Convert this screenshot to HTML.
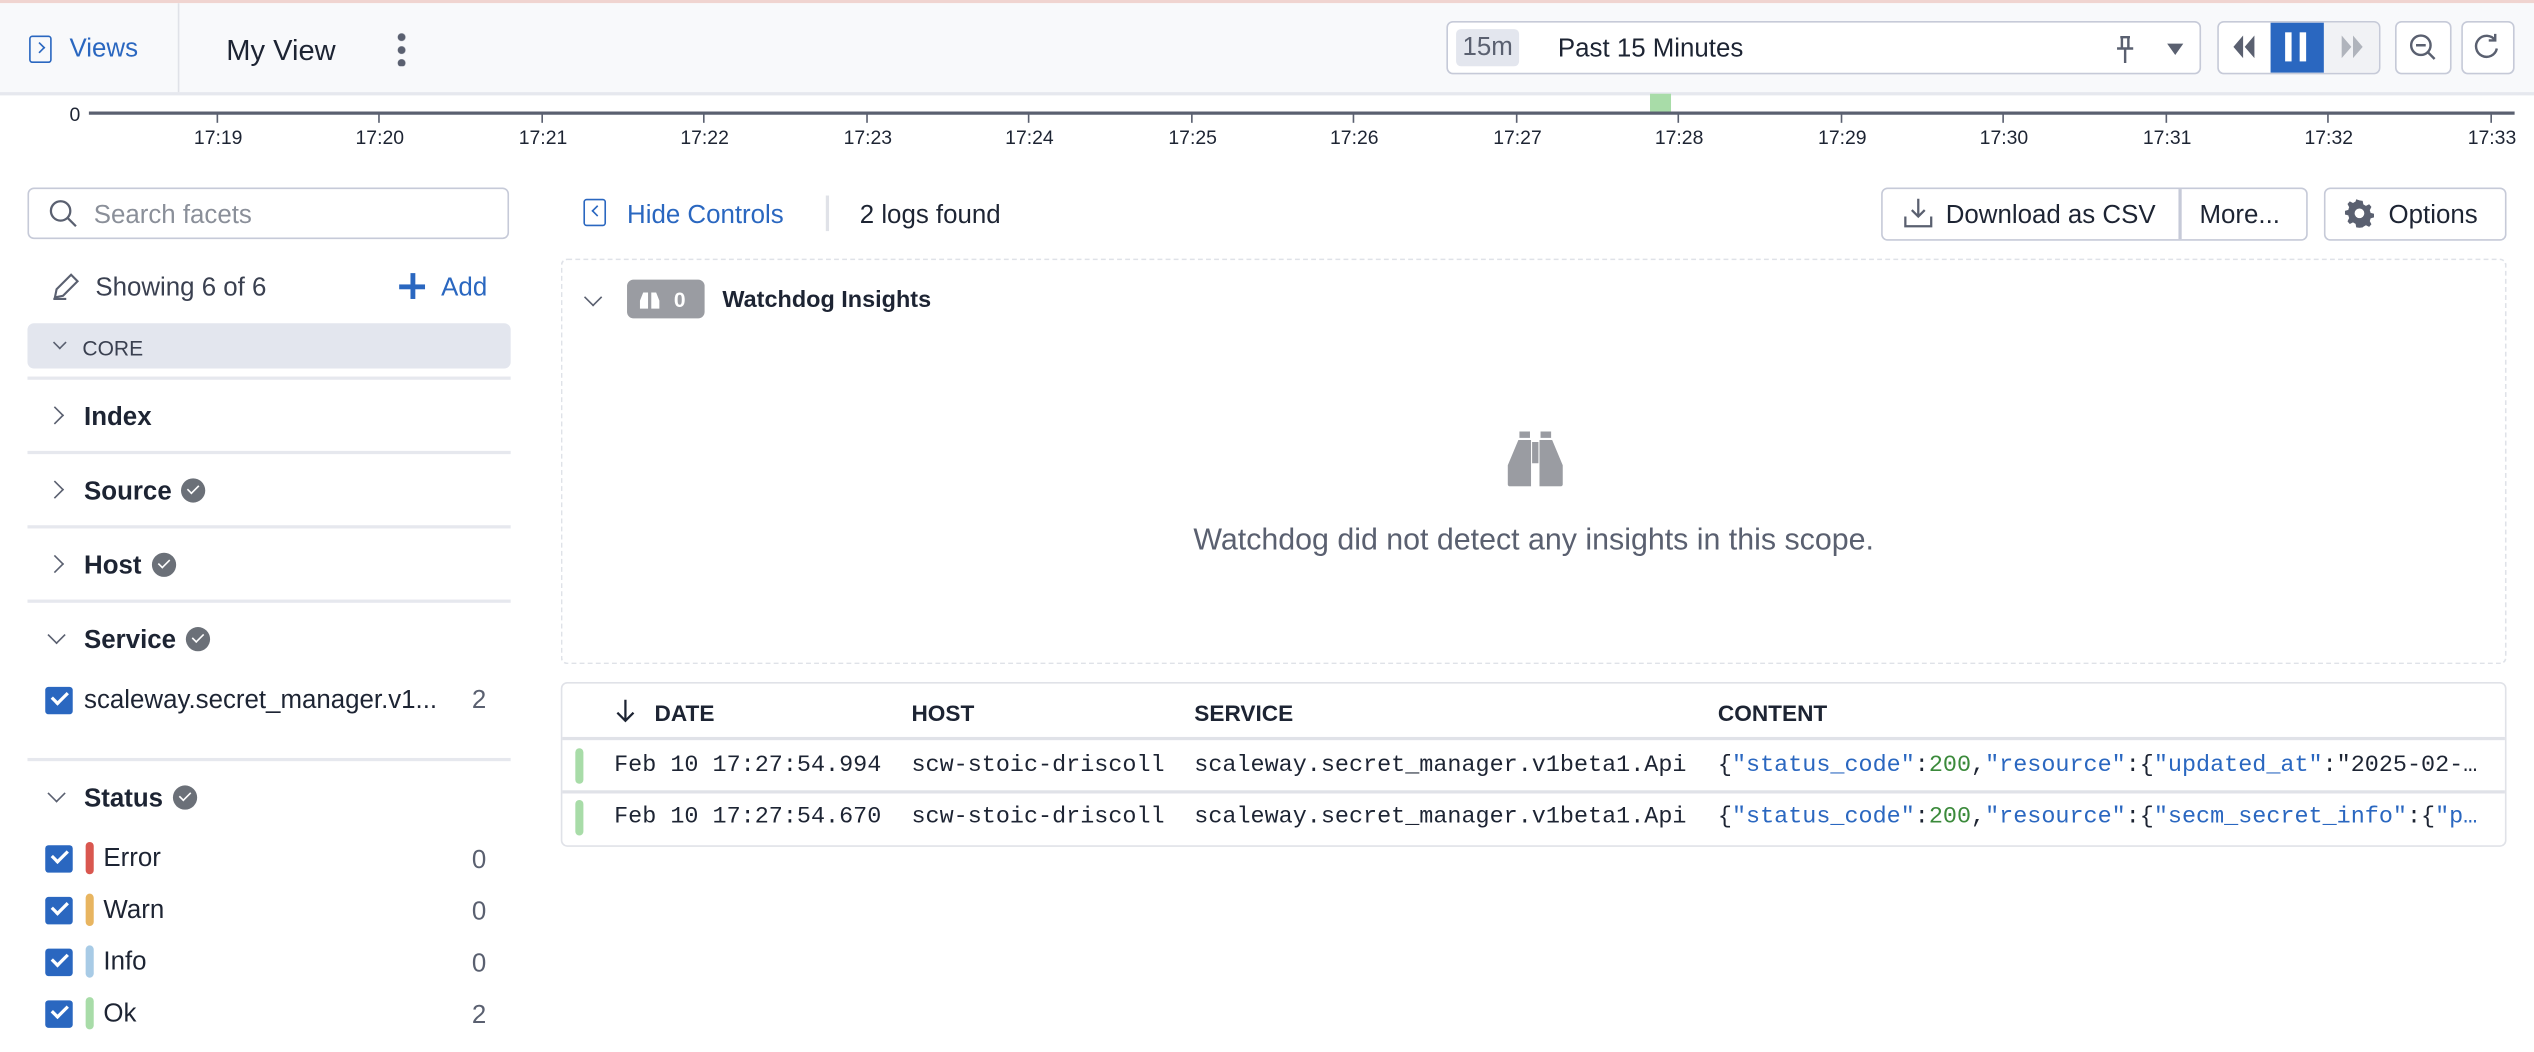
<!DOCTYPE html>
<html><head><meta charset="utf-8"><style>
html,body{margin:0;padding:0;width:2534px;height:1052px;overflow:hidden;background:#fff}
#w{position:absolute;left:0;top:0;width:1568px;height:651px;transform:scale(1.61607);transform-origin:0 0;font-family:"Liberation Sans","DejaVu Sans",sans-serif;color:#1d2433}
.a{position:absolute;white-space:nowrap}
.t{margin-top:2px}
.sep{position:absolute;left:17px;width:299px;height:2px;background:#e6e8ee}
.fl{position:absolute;left:52px;font-weight:bold;font-size:16px;line-height:20px;margin-top:2px}
.chev{position:absolute;left:30px;width:7px;height:7px;border-right:1.4px solid #5a6070;border-bottom:1.4px solid #5a6070}
.cb{position:absolute;left:28px;width:17px;height:17px;background:#2a67c0;border-radius:2px}
.cb:after{content:"";position:absolute;left:4px;top:3px;width:8px;height:4px;border-left:2px solid #fff;border-bottom:2px solid #fff;transform:rotate(-45deg)}
.ck{display:inline-block;width:15px;height:15px;border-radius:50%;background:#6b7078;vertical-align:-2px;margin-left:6px;position:relative}
.ck:after{content:"";position:absolute;left:4px;top:3.5px;width:6px;height:3px;border-left:1.8px solid #fff;border-bottom:1.8px solid #fff;transform:rotate(-45deg)}
.tick{position:absolute;top:70px;width:1px;height:6px;background:#5a6070}
.tl{position:absolute;top:78px;font-size:12px;width:40px;text-align:center}
.mono{font-family:"Liberation Mono","DejaVu Sans Mono",monospace;font-size:14.5px;margin-top:1px}
.k{color:#2a67c0}.n{color:#3b8a3b}
</style></head><body><div id="w">
<div class="a" style="left:0;top:0;width:1568px;height:2px;background:#f0d4d0"></div>
<div class="a" style="left:0;top:2px;width:1568px;height:55px;background:#f8f9fb;border-bottom:2px solid #e6e8ee"></div>
<div class="a" style="left:110px;top:2px;width:1px;height:55px;background:#e0e2e8"></div>
<div class="a" style="left:18px;top:22px;width:12px;height:15px;border:1.5px solid #2a67c0;border-radius:2px"></div>
<div class="a" style="left:22px;top:27px;width:4px;height:4px;border-right:1.4px solid #2a67c0;border-top:1.4px solid #2a67c0;transform:rotate(45deg)"></div>
<div class="a" style="left:43px;top:22px;font-size:16px;color:#2a67c0">Views</div>
<div class="a" style="left:140px;top:21px;font-size:18px">My View</div>
<div class="a" style="left:246px;top:19px;width:5px;height:22px;background:radial-gradient(circle,#5a6070 2.2px,transparent 2.6px) 0 0/5px 8px repeat-y"></div>
<div class="a" style="left:895px;top:13px;width:465px;height:31px;border:1.5px solid #c6cad8;border-radius:4px;background:#fff"></div>
<div class="a" style="left:901px;top:18px;width:39px;height:23px;background:#e3e6ee;border-radius:3px;font-size:16px;line-height:23px;text-align:center;color:#5a6070">15m</div>
<div class="a" style="left:964px;top:22px;font-size:16px">Past 15 Minutes</div>
<svg class="a" style="left:1308px;top:22px" width="14" height="18" viewBox="0 0 14 18"><path d="M4 1h6M5 1v7M9 1v7M2 8h10M7 8v9" stroke="#5a6070" stroke-width="1.5" fill="none"/></svg>
<div class="a" style="left:1341px;top:27px;width:0;height:0;border-left:5px solid transparent;border-right:5px solid transparent;border-top:7px solid #5a6070"></div>
<div class="a" style="left:1372px;top:13px;width:99px;height:31px;border:1.5px solid #c6cad8;border-radius:4px;background:#fff;overflow:hidden">
<div class="a" style="left:32px;top:0;width:33px;height:31px;background:#2a67c0"></div>
<div class="a" style="left:65px;top:0;width:34px;height:31px;background:#f1f2f5"></div></div>
<svg class="a" style="left:1380px;top:21px" width="18" height="16"><path d="M8 1L2 8l6 7zM15 1L9 8l6 7z" fill="#5a6070"/></svg>
<div class="a" style="left:1414px;top:20px;width:4px;height:18px;background:#fff"></div>
<div class="a" style="left:1423px;top:20px;width:4px;height:18px;background:#fff"></div>
<svg class="a" style="left:1446px;top:21px" width="18" height="16"><path d="M3 1l6 7-6 7zM10 1l6 7-6 7z" fill="#b0b4bc"/></svg>
<div class="a" style="left:1482px;top:13px;width:33px;height:31px;border:1.5px solid #c6cad8;border-radius:4px;background:#fff"></div>
<svg class="a" style="left:1490px;top:20px" width="18" height="18"><circle cx="8" cy="8" r="6" stroke="#5a6070" stroke-width="1.5" fill="none"/><path d="M5 8h6M12.5 12.5l4 4" stroke="#5a6070" stroke-width="1.5"/></svg>
<div class="a" style="left:1523px;top:13px;width:31px;height:31px;border:1.5px solid #c6cad8;border-radius:4px;background:#fff"></div>
<svg class="a" style="left:1530px;top:20px" width="18" height="18"><path d="M14 5A6.5 6.5 0 1 0 15 10M14 1v4h-4" stroke="#5a6070" stroke-width="1.5" fill="none"/></svg>
<div class="a" style="left:43px;top:64px;font-size:12px">0</div>
<div class="a" style="left:55px;top:69px;width:1501px;height:2px;background:#5a6070"></div>
<div class="a" style="left:1021px;top:58px;width:13px;height:11px;background:#a8dca8"></div>
<div class="tick" style="left:134px"></div><div class="tl" style="left:115px">17:19</div>
<div class="tick" style="left:234px"></div><div class="tl" style="left:215px">17:20</div>
<div class="tick" style="left:335px"></div><div class="tl" style="left:316px">17:21</div>
<div class="tick" style="left:435px"></div><div class="tl" style="left:416px">17:22</div>
<div class="tick" style="left:536px"></div><div class="tl" style="left:517px">17:23</div>
<div class="tick" style="left:636px"></div><div class="tl" style="left:617px">17:24</div>
<div class="tick" style="left:737px"></div><div class="tl" style="left:718px">17:25</div>
<div class="tick" style="left:837px"></div><div class="tl" style="left:818px">17:26</div>
<div class="tick" style="left:938px"></div><div class="tl" style="left:919px">17:27</div>
<div class="tick" style="left:1038px"></div><div class="tl" style="left:1019px">17:28</div>
<div class="tick" style="left:1139px"></div><div class="tl" style="left:1120px">17:29</div>
<div class="tick" style="left:1239px"></div><div class="tl" style="left:1220px">17:30</div>
<div class="tick" style="left:1340px"></div><div class="tl" style="left:1321px">17:31</div>
<div class="tick" style="left:1440px"></div><div class="tl" style="left:1421px">17:32</div>
<div class="tick" style="left:1541px"></div><div class="tl" style="left:1522px">17:33</div>

<div class="a" style="left:17px;top:116px;width:296px;height:30px;border:1.5px solid #c6cad8;border-radius:4px"></div>
<svg class="a" style="left:30px;top:123px" width="18" height="18"><circle cx="7.5" cy="7.5" r="6" stroke="#5a6070" stroke-width="1.4" fill="none"/><path d="M12 12l5 5" stroke="#5a6070" stroke-width="1.4"/></svg>
<div class="a t" style="left:58px;top:123px;font-size:16px;color:#8a8f99">Search facets</div>
<svg class="a" style="left:32px;top:168px" width="18" height="18"><path d="M2 16l1-5 9-9 4 4-9 9zM1 17h8" stroke="#5a6070" stroke-width="1.3" fill="none"/></svg>
<div class="a t" style="left:59px;top:168px;font-size:16px;color:#3a4050">Showing 6 of 6</div>
<div class="a" style="left:247px;top:176px;width:16px;height:2.5px;background:#2a67c0"></div>
<div class="a" style="left:254px;top:169px;width:2.5px;height:16px;background:#2a67c0"></div>
<div class="a t" style="left:273px;top:168px;font-size:16px;color:#2a67c0">Add</div>
<div class="a" style="left:17px;top:200px;width:299px;height:28px;background:#e3e6ee;border-radius:4px"></div>
<div class="chev" style="left:34px;top:209px;width:5px;height:5px;transform:rotate(45deg)"></div>
<div class="a" style="left:51px;top:208px;font-size:13px;color:#3a4050">CORE</div>
<div class="sep" style="top:233px"></div>
<div class="chev" style="top:253px;transform:rotate(-45deg)"></div><div class="fl" style="top:247px">Index</div>
<div class="sep" style="top:279px"></div>
<div class="chev" style="top:299px;transform:rotate(-45deg)"></div><div class="fl" style="top:293px">Source<span class="ck"></span></div>
<div class="sep" style="top:325px"></div>
<div class="chev" style="top:345px;transform:rotate(-45deg)"></div><div class="fl" style="top:339px">Host<span class="ck"></span></div>
<div class="sep" style="top:371px"></div>
<div class="chev" style="left:31px;top:389px;transform:rotate(45deg)"></div><div class="fl" style="top:385px">Service<span class="ck"></span></div>
<div class="cb" style="top:425px"></div>
<div class="a t" style="left:52px;top:423px;font-size:16px">scaleway.secret_manager.v1...</div>
<div class="a t" style="left:292px;top:423px;font-size:16px;color:#5a6070">2</div>
<div class="sep" style="top:469px"></div>
<div class="chev" style="left:31px;top:487px;transform:rotate(45deg)"></div><div class="fl" style="top:483px">Status<span class="ck"></span></div>
<div class="cb" style="top:523px"></div><div class="a" style="left:53px;top:521px;width:5px;height:20px;border-radius:3px;background:#d9574f"></div><div class="a t" style="left:64px;top:521px;font-size:16px">Error</div><div class="a t" style="left:292px;top:522px;font-size:16px;color:#5a6070">0</div>
<div class="cb" style="top:555px"></div><div class="a" style="left:53px;top:553px;width:5px;height:20px;border-radius:3px;background:#e8b560"></div><div class="a t" style="left:64px;top:553px;font-size:16px">Warn</div><div class="a t" style="left:292px;top:554px;font-size:16px;color:#5a6070">0</div>
<div class="cb" style="top:587px"></div><div class="a" style="left:53px;top:585px;width:5px;height:20px;border-radius:3px;background:#a8cbe6"></div><div class="a t" style="left:64px;top:585px;font-size:16px">Info</div><div class="a t" style="left:292px;top:586px;font-size:16px;color:#5a6070">0</div>
<div class="cb" style="top:619px"></div><div class="a" style="left:53px;top:617px;width:5px;height:20px;border-radius:3px;background:#a8dca8"></div><div class="a t" style="left:64px;top:617px;font-size:16px">Ok</div><div class="a t" style="left:292px;top:618px;font-size:16px;color:#5a6070">2</div>

<div class="a" style="left:361px;top:123px;width:12px;height:15px;border:1.5px solid #2a67c0;border-radius:2px"></div>
<div class="a" style="left:367px;top:128px;width:4px;height:4px;border-left:1.4px solid #2a67c0;border-bottom:1.4px solid #2a67c0;transform:rotate(45deg)"></div>
<div class="a t" style="left:388px;top:123px;font-size:16px;color:#2a67c0">Hide Controls</div>
<div class="a" style="left:511px;top:121px;width:1.5px;height:22px;background:#e0e2e8"></div>
<div class="a t" style="left:532px;top:123px;font-size:16px">2 logs found</div>
<div class="a" style="left:1164px;top:116px;width:262px;height:31px;border:1.5px solid #c6cad8;border-radius:4px"></div>
<div class="a" style="left:1348px;top:117px;width:1.5px;height:31px;background:#c6cad8"></div>
<svg class="a" style="left:1178px;top:122px" width="18" height="20"><path d="M9 1v11M5 8l4 4 4-4M1 12v6h16v-6" stroke="#5a6070" stroke-width="1.4" fill="none"/></svg>
<div class="a t" style="left:1204px;top:123px;font-size:16px">Download as CSV</div>
<div class="a t" style="left:1361px;top:123px;font-size:16px">More...</div>
<div class="a" style="left:1438px;top:116px;width:111px;height:31px;border:1.5px solid #c6cad8;border-radius:4px"></div>
<svg class="a" style="left:1451px;top:123px" width="18" height="18" viewBox="0 0 18 18"><path d="M9 1l2 .3.4 2.2 1.6.9 2-1 1.4 1.6-1 2 .5 1.7 2.1.6v2.2l-2.1.6-.5 1.7 1 2-1.4 1.6-2-1-1.6.9L11 17.7 9 18l-2-.3-.4-2.2-1.6-.9-2 1L1.6 14l1-2-.5-1.7L0 9.7V7.5l2.1-.6.5-1.7-1-2L3 1.6l2 1 1.6-.9L7 .3z" fill="#5a6070"/><circle cx="9" cy="9" r="3" fill="#fff"/></svg>
<div class="a t" style="left:1478px;top:123px;font-size:16px">Options</div>

<div class="a" style="left:347px;top:160px;width:1202px;height:249px;border:1.5px dashed #dfe2e8;border-radius:4px"></div>
<div class="chev" style="left:363px;top:180px;transform:rotate(45deg)"></div>
<div class="a" style="left:388px;top:173px;width:48px;height:24px;background:#9a9ca2;border-radius:4px"></div>
<svg class="a" style="left:395px;top:178px" width="14" height="14"><path d="M1 13V8l2-5h3v10zM13 13V8l-2-5H8v10z" fill="#fff"/></svg>
<div class="a" style="left:417px;top:178px;font-size:13px;font-weight:bold;color:#fff">0</div>
<div class="a" style="left:447px;top:178px;font-size:14.5px;font-weight:bold">Watchdog Insights</div>
<svg class="a" style="left:932px;top:267px" width="36" height="34" viewBox="0 0 52 52"><path d="M11 0h10v6H11zM31 0h10v6H31zM10 8h12v44H2c-1 0-2-1-2-2V32zM42 8H30v44h20c1 0 2-1 2-2V32zM23 10h6v20h-6z" fill="#9a9ca2"/></svg>
<div class="a" style="left:0;width:1898px;top:323px;text-align:center;font-size:18.8px;color:#5a6070">Watchdog did not detect any insights in this scope.</div>

<div class="a" style="left:347px;top:422px;width:1202px;height:100px;border:1.5px solid #e0e2e8;border-radius:4px"></div>
<div class="a" style="left:348px;top:456px;width:1202px;height:2px;background:#e0e2e8"></div>
<div class="a" style="left:348px;top:489px;width:1202px;height:2px;background:#e0e2e8"></div>
<svg class="a" style="left:381px;top:432px" width="12" height="16"><path d="M6 1v13M1 9l5 5 5-5" stroke="#1d2433" stroke-width="1.4" fill="none"/></svg>
<div class="a" style="left:405px;top:433px;font-size:14px;font-weight:bold">DATE</div>
<div class="a" style="left:564px;top:433px;font-size:14px;font-weight:bold">HOST</div>
<div class="a" style="left:739px;top:433px;font-size:14px;font-weight:bold">SERVICE</div>
<div class="a" style="left:1063px;top:433px;font-size:14px;font-weight:bold">CONTENT</div>
<div class="a" style="left:356px;top:463px;width:5px;height:22px;border-radius:3px;background:#a8dca8"></div>
<div class="a mono" style="left:380px;top:465px">Feb 10 17:27:54.994</div>
<div class="a mono" style="left:564px;top:465px">scw-stoic-driscoll</div>
<div class="a mono" style="left:739px;top:465px">scaleway.secret_manager.v1beta1.Api</div>
<div class="a mono" style="left:1063px;top:465px;width:486px;overflow:hidden">{<span class="k">"status_code"</span>:<span class="n">200</span>,<span class="k">"resource"</span>:{<span class="k">"updated_at"</span>:"2025-02-…</div>
<div class="a" style="left:356px;top:495px;width:5px;height:22px;border-radius:3px;background:#a8dca8"></div>
<div class="a mono" style="left:380px;top:497px">Feb 10 17:27:54.670</div>
<div class="a mono" style="left:564px;top:497px">scw-stoic-driscoll</div>
<div class="a mono" style="left:739px;top:497px">scaleway.secret_manager.v1beta1.Api</div>
<div class="a mono" style="left:1063px;top:497px;width:486px;overflow:hidden">{<span class="k">"status_code"</span>:<span class="n">200</span>,<span class="k">"resource"</span>:{<span class="k">"secm_secret_info"</span>:{<span class="k">"p…</span></div>
</div></body></html>
